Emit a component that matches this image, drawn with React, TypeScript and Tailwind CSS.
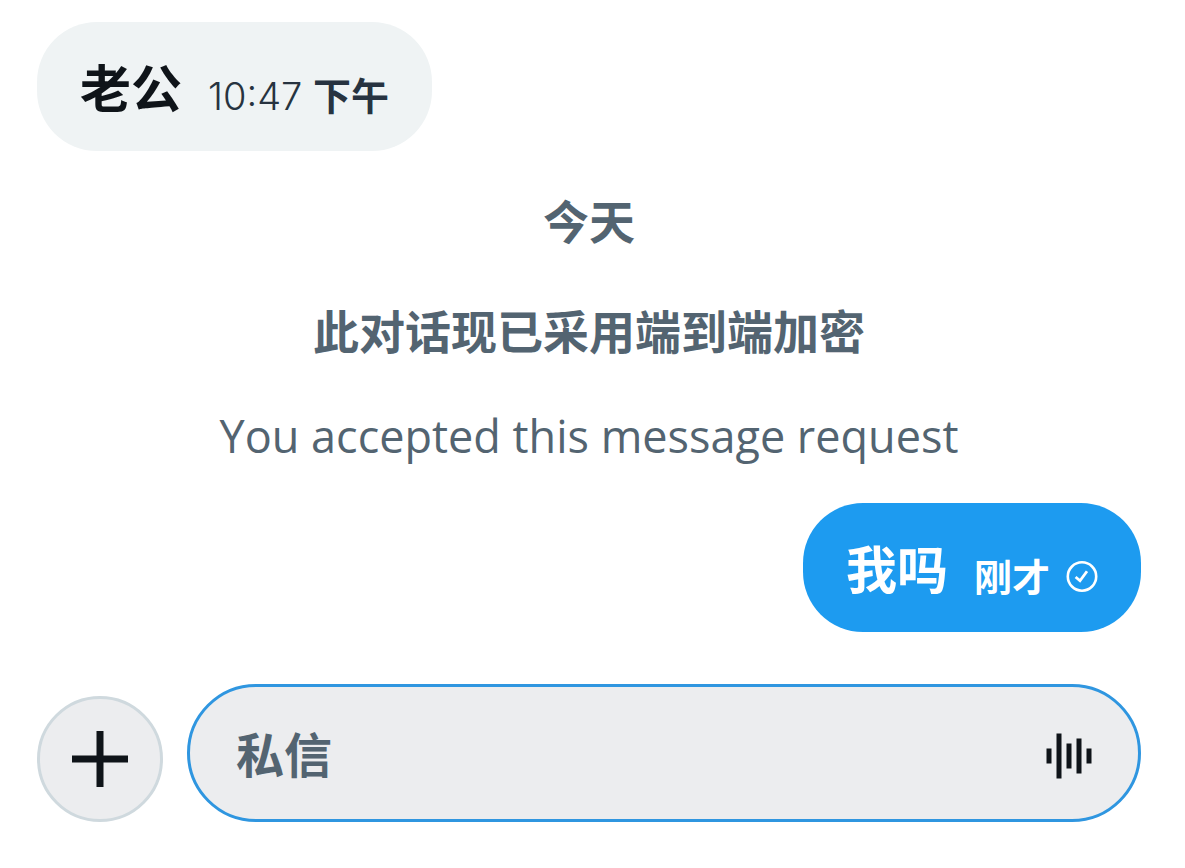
import React from 'react';

interface BubbleProps {
  text: string;
  outgoing?: boolean;
  children: React.ReactNode;
}

const Bubble: React.FC<BubbleProps> = ({ text, outgoing = false, children }) => (
  <div
    className={`flex items-end gap-[26px] rounded-[60px] px-[43px] pt-[35px] pb-[29px] ${
      outgoing ? 'self-end bg-[#1d9bf0] text-white' : 'self-start bg-[#eff3f4] text-[#0f1419]'
    }`}
  >
    <p className="text-[51px] leading-[65px] font-bold">{text}</p>
    <div className="flex items-center gap-4 text-[38px] leading-[52px]">{children}</div>
  </div>
);

const SentIcon: React.FC = () => (
  <svg width="32" height="32" viewBox="0 0 32 32" fill="none" stroke="currentColor" aria-hidden="true">
    <circle cx="16" cy="15.500" r="14.200" strokeWidth="2.600" />
    <path d="M9.600 16l4.400 3.800 7-9.600" strokeWidth="2.800" />
  </svg>
);

const PlusIcon: React.FC = () => (
  <svg width="56" height="56" viewBox="0 0 56 56" fill="currentColor" aria-hidden="true">
    <path d="M24.500 0h7v24.500H56v7H31.500V56h-7V31.500H0v-7h24.500z" />
  </svg>
);

const VoiceIcon: React.FC = () => (
  <svg width="46" height="46" viewBox="0 0 46 46" fill="currentColor" aria-hidden="true">
    <path d="M0.500 15.500h5v15h-5zM10.500 0.500h5v45h-5zM20.500 10.500h5v25h-5zM30.500 5.500h5v35h-5zM40.500 15.500h5v15h-5z" />
  </svg>
);

const App: React.FC = () => {
  return (
    <main className="flex flex-col bg-white pt-[22px] pr-11 pb-11 pl-[37px] font-[Inter,'Noto_Sans_CJK_SC',sans-serif]">
      <Bubble text="老公">
        <time className="text-[#273340]">
          <span className="font-light">10:47</span> <span className="font-bold">下午</span>
        </time>
      </Bubble>

      <div className="flex flex-col gap-12 pt-10 pb-[42px] text-center text-[46px] leading-[62px] text-[#536471]">
        <p className="font-bold">今天</p>
        <p className="font-bold">此对话现已采用端到端加密</p>
        <p className="font-['Open_Sans',sans-serif] text-[45px] leading-[50px]">You accepted this message request</p>
      </div>

      <Bubble text="我吗" outgoing>
        <span className="font-bold">刚才</span>
        <SentIcon />
      </Bubble>

      <form className="mt-[52px] flex items-end gap-6" onSubmit={(e) => e.preventDefault()}>
        <button
          type="button"
          aria-label="添加"
          className="flex size-[126px] shrink-0 items-center justify-center rounded-full border-3 border-[#cfd9de] bg-[#ecedef] text-[#0f1419]"
        >
          <PlusIcon />
        </button>
        <div className="flex min-w-0 flex-1 items-center rounded-full border-3 border-[#2f96e0] bg-[#ecedef] px-[46px] pt-[35px] pb-[29px]">
          <input
            type="text"
            aria-label="私信"
            placeholder="私信"
            className="h-[68px] min-w-0 flex-1 bg-transparent text-[48px] font-bold text-[#0f1419] outline-none placeholder:text-[#536471]"
          />
          <button type="button" aria-label="语音" className="shrink-0 text-[#0f1419]">
            <VoiceIcon />
          </button>
        </div>
      </form>
    </main>
  );
};

export default App;
